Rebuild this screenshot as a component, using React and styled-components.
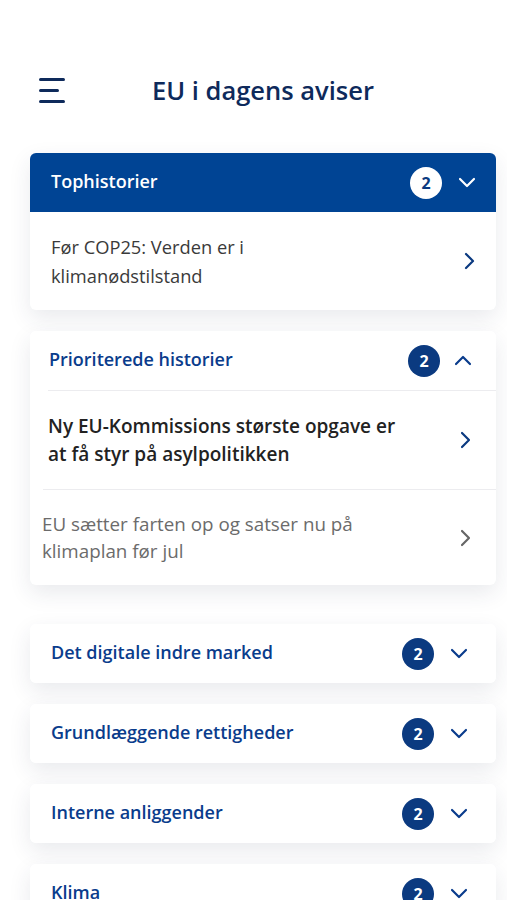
import styled, { createGlobalStyle } from "styled-components";

const GlobalStyle = createGlobalStyle`
  body {
    margin: 0;
    background: #ffffff;
    font-family: "Open Sans", "Noto Sans", sans-serif;
  }
`;

const Page = styled.div`
  width: 507px;
  height: 900px;
  padding: 60px 11px 0 30px;
  box-sizing: border-box;
  overflow: hidden;
`;

const Header = styled.header`
  display: grid;
  grid-template-columns: 40px 1fr 40px;
  align-items: center;
  height: 60px;
  margin-bottom: 33px;
`;

const Burger = styled.button`
  display: flex;
  flex-direction: column;
  gap: 8px;
  padding: 0 0 0 9px;
  border: 0;
  background: none;

  span {
    display: block;
    height: 3px;
    border-radius: 2px;
    background: #0e2a5b;
  }
  span:nth-child(1),
  span:nth-child(3) {
    width: 26px;
  }
  span:nth-child(2) {
    width: 20px;
  }
`;

const Title = styled.h1`
  margin: 0;
  text-align: center;
  font-size: 25.5px;
  font-weight: 600;
  color: #0e2a5b;
`;

const List = styled.div`
  display: flex;
  flex-direction: column;
  gap: 21px;
`;

const Card = styled.section`
  background: #fff;
  border-radius: 6px;
  overflow: hidden;
  flex-shrink: 0;
  box-shadow: 0 8px 22px rgba(40, 50, 80, 0.1);
  margin-bottom: ${(p) => p.$after || 0}px;
`;

const CardHead = styled.div`
  display: flex;
  align-items: center;
  height: 59px;
  padding: 0 ${(p) => p.$pr}px 0 ${(p) => p.$pl}px;
  background: ${(p) => (p.$filled ? "#004494" : "#fff")};
  color: ${(p) => (p.$filled ? "#fff" : "#0a3c8c")};
`;

const HeadTitle = styled.span`
  flex: 1;
  padding-bottom: 3px;
  font-size: 18px;
  font-weight: 600;
`;

const Badge = styled.span`
  display: flex;
  align-items: center;
  justify-content: center;
  width: 32px;
  height: 32px;
  border-radius: 50%;
  font-size: 16px;
  font-weight: 700;
  background: ${(p) => (p.$light ? "#fff" : "#0b3a80")};
  color: ${(p) => (p.$light ? "#0b3a80" : "#fff")};
  margin-right: ${(p) => p.$gap}px;
`;

const Divider = styled.div`
  height: 1px;
  background: #ececef;
  margin-left: ${(p) => p.$inset}px;
`;

const Item = styled.div`
  display: flex;
  align-items: center;
  padding: ${(p) => p.$py}px ${(p) => p.$pr}px ${(p) => p.$py}px ${(p) => p.$pl}px;
`;

const tones = {
  plain: { size: 18.3, lh: 29, weight: 400, color: "#3a3a3a" },
  strong: { size: 19, lh: 28, weight: 600, color: "#222" },
  muted: { size: 18.8, lh: 27, weight: 400, color: "#6b6b6b" },
};

const ItemText = styled.p`
  flex: 1;
  margin: 0;
  font-size: ${(p) => tones[p.$tone].size}px;
  line-height: ${(p) => tones[p.$tone].lh}px;
  font-weight: ${(p) => tones[p.$tone].weight};
  color: ${(p) => tones[p.$tone].color};
`;

const Chevron = ({ dir = "down", color = "currentColor" }) => {
  const paths = {
    down: "M2 5l7 7 7-7",
    up: "M2 12l7-7 7 7",
    right: "M6 2l7 7-7 7",
  };
  return (
    <svg width="18" height="18" viewBox="0 0 18 18" fill="none">
      <path d={paths[dir]} stroke={color} strokeWidth="2.2" strokeLinecap="round" strokeLinejoin="round" />
    </svg>
  );
};

const sections = [
  "Det digitale indre marked",
  "Grundlæggende rettigheder",
  "Interne anliggender",
  "Klima",
];

export default function App() {
  return (
    <>
      <GlobalStyle />
      <Page>
        <Header>
          <Burger aria-label="Menu">
            <span />
            <span />
            <span />
          </Burger>
          <Title>EU i dagens aviser</Title>
          <div />
        </Header>

        <List>
          <Card>
            <CardHead $filled $pl={21} $pr={20}>
              <HeadTitle>Tophistorier</HeadTitle>
              <Badge $light $gap={16}>2</Badge>
              <Chevron dir="down" />
            </CardHead>
            <Item $py={20} $pl={21} $pr={18}>
              <ItemText $tone="plain">Før COP25: Verden er i<br />klimanødstilstand</ItemText>
              <Chevron dir="right" color="#0b3a80" />
            </Item>
          </Card>

          <Card $after={18}>
            <CardHead $pl={19} $pr={24}>
              <HeadTitle>Prioriterede historier</HeadTitle>
              <Badge $gap={14}>2</Badge>
              <Chevron dir="up" />
            </CardHead>
            <Divider $inset={18} />
            <Item $py={21} $pl={18} $pr={22}>
              <ItemText $tone="strong">
                Ny EU-Kommissions største opgave er<br />at få styr på asylpolitikken
              </ItemText>
              <Chevron dir="right" color="#0b3a80" />
            </Item>
            <Divider $inset={13} />
            <Item $py={20.5} $pl={12} $pr={22}>
              <ItemText $tone="muted">
                EU sætter farten op og satser nu på<br />klimaplan før jul
              </ItemText>
              <Chevron dir="right" color="#666" />
            </Item>
          </Card>

          {sections.map((s) => (
            <Card key={s}>
              <CardHead $pl={21} $pr={28}>
                <HeadTitle>{s}</HeadTitle>
                <Badge $gap={16}>2</Badge>
                <Chevron dir="down" />
              </CardHead>
            </Card>
          ))}
        </List>
      </Page>
    </>
  );
}
